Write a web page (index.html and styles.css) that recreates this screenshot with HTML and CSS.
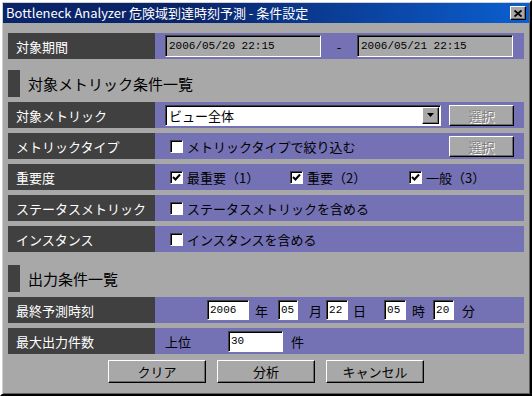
FILE: index.html
```html
<!DOCTYPE html>
<html lang="ja">
<head>
  <meta charset="UTF-8">
  <title>Bottleneck Analyzer - 条件設定</title>
  <link rel="stylesheet" href="styles.css">
</head>
<body>
  <div class="window">
    <div class="titlebar">
      <span class="title">Bottleneck Analyzer 危険域到達時刻予測 - 条件設定</span>
      <span class="close-btn">
        <svg width="8" height="7" viewBox="0 0 8 7"><path d="M0.5 0.5 L7.5 6.5 M7.5 0.5 L0.5 6.5" stroke="#000" stroke-width="1.8"/></svg>
      </span>
    </div>

    <div class="content">
      <div class="row period-row">
        <div class="label">対象期間</div>
        <div class="value">
          <span class="field date-field">2006/05/20 22:15</span>
          <span class="dash">-</span>
          <span class="field date-field">2006/05/21 22:15</span>
        </div>
      </div>

      <div class="section-head"><span class="marker"></span>対象メトリック条件一覧</div>
      <div class="rows">
        <div class="row">
          <div class="label">対象メトリック</div>
          <div class="value">
            <span class="select">
              <span class="select-text">ビュー全体</span>
              <span class="select-arrow">
                <svg width="7" height="4" viewBox="0 0 7 4"><path d="M0 0 H7 L3.5 4 Z" fill="#000"/></svg>
              </span>
            </span>
            <span class="btn small-btn disabled">選択</span>
          </div>
        </div>
        <div class="row">
          <div class="label">メトリックタイプ</div>
          <div class="value">
            <label class="check"><span class="box"></span>メトリックタイプで絞り込む</label>
            <span class="btn small-btn disabled">選択</span>
          </div>
        </div>
        <div class="row">
          <div class="label">重要度</div>
          <div class="value">
            <label class="check sev"><span class="box checked"><svg width="9" height="9" viewBox="0 0 9 9"><path d="M1 4 L3.5 6.5 L8 1.5" fill="none" stroke="#000" stroke-width="2"/></svg></span>最重要（1）</label>
            <label class="check sev"><span class="box checked"><svg width="9" height="9" viewBox="0 0 9 9"><path d="M1 4 L3.5 6.5 L8 1.5" fill="none" stroke="#000" stroke-width="2"/></svg></span>重要（2）</label>
            <label class="check sev"><span class="box checked"><svg width="9" height="9" viewBox="0 0 9 9"><path d="M1 4 L3.5 6.5 L8 1.5" fill="none" stroke="#000" stroke-width="2"/></svg></span>一般（3）</label>
          </div>
        </div>
        <div class="row">
          <div class="label">ステータスメトリック</div>
          <div class="value">
            <label class="check"><span class="box"></span>ステータスメトリックを含める</label>
          </div>
        </div>
        <div class="row">
          <div class="label">インスタンス</div>
          <div class="value">
            <label class="check"><span class="box"></span>インスタンスを含める</label>
          </div>
        </div>
      </div>

      <div class="section-head second"><span class="marker"></span>出力条件一覧</div>
      <div class="rows">
        <div class="row">
          <div class="label">最終予測時刻</div>
          <div class="value time-row">
            <span class="field num year">2006</span><span class="unit u-year">年</span>
            <span class="field num month">05</span><span class="unit u-month">月</span>
            <span class="field num day">22</span><span class="unit u-day">日</span>
            <span class="field num hour">05</span><span class="unit u-hour">時</span>
            <span class="field num min">20</span><span class="unit u-min">分</span>
          </div>
        </div>
        <div class="row">
          <div class="label">最大出力件数</div>
          <div class="value">
            <span>上位</span>
            <span class="field num count">30</span>
            <span class="unit u-count">件</span>
          </div>
        </div>
      </div>

      <div class="buttons">
        <span class="btn">クリア</span>
        <span class="btn">分析</span>
        <span class="btn">キャンセル</span>
      </div>
    </div>
  </div>
</body>
</html>
```

FILE: styles.css
```css
body {
  margin: 0;
  background: #a8a8a8;
  font-family: "Noto Sans CJK JP", sans-serif;
  font-size: 13px;
  color: #000;
}
.window {
  box-sizing: border-box;
  width: 532px;
  height: 396px;
  border: 2px solid;
  border-color: #ffffff #000000 #000000 #ffffff;
  box-shadow: inset 1px 1px #d4d0c8, inset -1px -1px #606060;
  padding: 1px;
}
.titlebar {
  height: 20px;
  display: flex;
  align-items: center;
  justify-content: space-between;
  padding: 0 3px 0 3px;
  background: linear-gradient(to right, #0a246a 0%, #0a246a 35%, #0b5fd0 100%);
  color: #fff;
}
.title {
  font-size: 13px;
  line-height: 20px;
  white-space: nowrap;
}
.close-btn {
  box-sizing: border-box;
  width: 16px;
  height: 14px;
  display: flex;
  align-items: center;
  justify-content: center;
  background: #a8a8a8;
  border: 1px solid;
  border-color: #fff #000 #000 #fff;
  box-shadow: inset -1px -1px #707070;
}

.content {
  padding: 10px 5px 0 5px;
}
.row {
  display: flex;
  height: 26px;
}
.label {
  width: 139px;
  flex-shrink: 0;
  padding-left: 8px;
  background: #404040;
  color: #fff;
  display: flex;
  align-items: center;
  white-space: nowrap;
}
.value {
  flex: 1;
  min-width: 0;
  background: #7472b4;
  display: flex;
  align-items: center;
  padding: 0 10px;
  white-space: nowrap;
}
.rows {
  display: flex;
  flex-direction: column;
  gap: 5px;
}

.section-head {
  height: 27px;
  margin: 11px 0 5px 0;
  display: flex;
  align-items: center;
  font-size: 15px;
}
.section-head.second {
  margin-top: 13px;
}
.marker {
  width: 12px;
  height: 27px;
  background: #404040;
  margin-right: 8px;
}

/* sunken boxes */
.field {
  box-sizing: border-box;
  display: inline-flex;
  align-items: center;
  flex-shrink: 0;
  border: 1px solid;
  border-color: #404040 #ffffff #ffffff #404040;
  box-shadow: inset 1px 1px #000;
  background: #fff;
  font-family: "Liberation Mono", monospace;
  font-size: 11px;
  padding-left: 3px;
}
.date-field {
  width: 156px;
  height: 22px;
  background: #a8a8a8;
}
.dash {
  width: 36px;
  text-align: center;
}
.num {
  height: 20px;
  padding-left: 2px;
}

/* 年 月 日 時 分 spacing, measured from the dialog */
.num.year { width: 42px; margin-left: 42px; }
.u-year { margin-left: 6px; }
.num.month { width: 20px; margin-left: 10px; }
.u-month { margin-left: 11px; }
.num.day { width: 22px; margin-left: 4px; }
.u-day { margin-left: 5px; }
.num.hour { width: 22px; margin-left: 18px; }
.u-hour { margin-left: 6px; }
.num.min { width: 21px; margin-left: 8px; }
.u-min { margin-left: 8px; }
.num.count { width: 55px; height: 21px; margin-left: 37px; }
.u-count { margin-left: 8px; }

.select {
  box-sizing: border-box;
  width: 276px;
  height: 21px;
  display: flex;
  align-items: center;
  justify-content: space-between;
  border: 1px solid;
  border-color: #404040 #ffffff #ffffff #404040;
  box-shadow: inset 1px 1px #000;
  background: #fff;
  padding: 0 1px 0 3px;
}
.select-arrow {
  box-sizing: border-box;
  width: 17px;
  height: 17px;
  display: flex;
  align-items: center;
  justify-content: center;
  background: #a8a8a8;
  border: 1px solid;
  border-color: #fff #000 #000 #fff;
  box-shadow: inset -1px -1px #707070;
}

.btn {
  box-sizing: border-box;
  display: inline-flex;
  align-items: center;
  justify-content: center;
  width: 98px;
  height: 23px;
  background: #a8a8a8;
  border: 1px solid;
  border-color: #fff #000 #000 #fff;
  box-shadow: inset -1px -1px #6a6a6a;
}
.small-btn {
  width: 65px;
  height: 21px;
  margin-left: auto;
}
.btn.disabled {
  color: #808080;
  text-shadow: 1px 1px #fff;
}

.check {
  display: inline-flex;
  align-items: center;
  flex-shrink: 0;
  margin-left: 5px;
}
.check.sev {
  width: 120px;
}
.check.sev + .check.sev {
  margin-left: 0;
  width: 119px;
}
.check.sev:last-child {
  width: auto;
}
.box {
  box-sizing: border-box;
  width: 13px;
  height: 13px;
  margin-right: 4px;
  display: inline-flex;
  align-items: center;
  justify-content: center;
  background: #fff;
  border: 1px solid;
  border-color: #404040 #ffffff #ffffff #404040;
  box-shadow: inset 1px 1px #000;
}

.buttons {
  display: flex;
  justify-content: center;
  gap: 11px;
  margin-top: 6px;
}
```
